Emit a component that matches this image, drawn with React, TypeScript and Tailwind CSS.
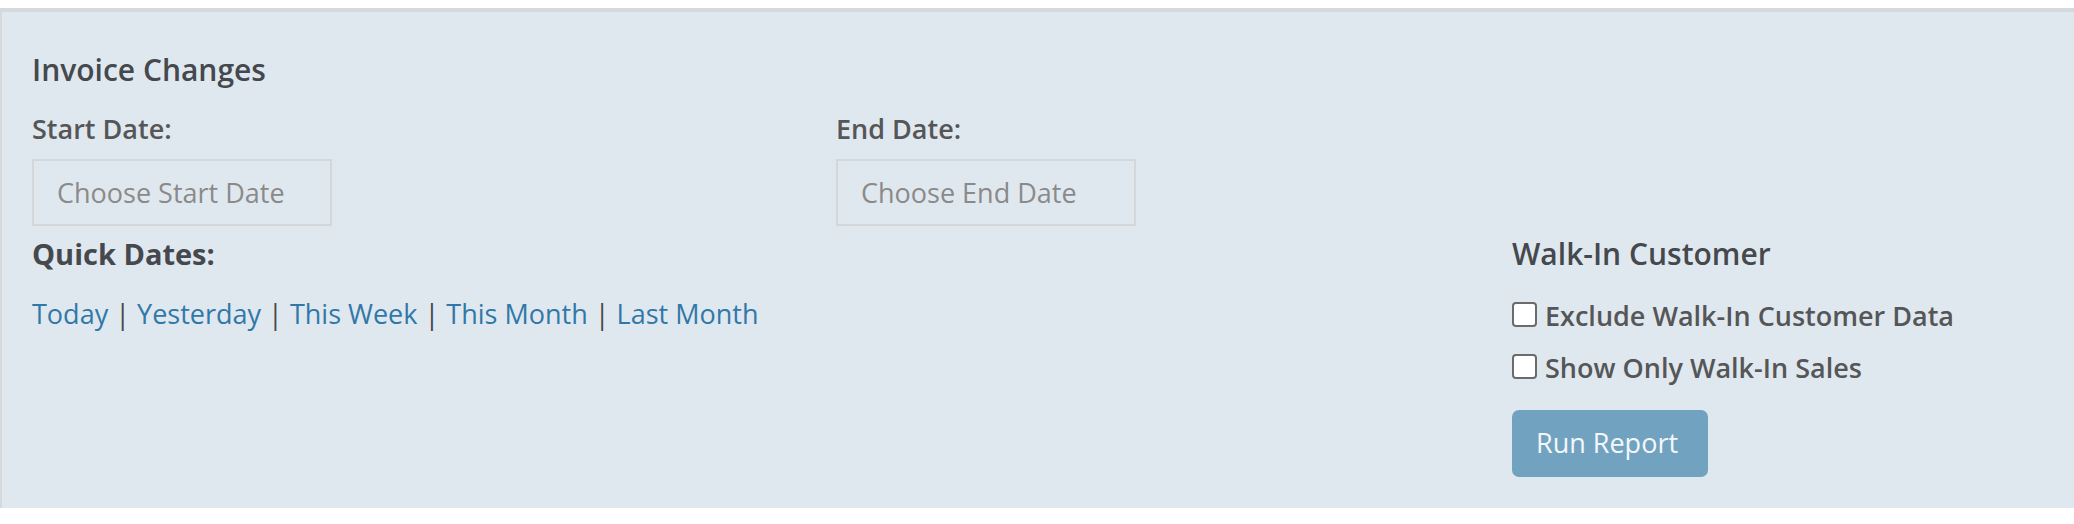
import React from "react";

const Check = ({ label }: { label: string }) => (
  <label className="flex items-start">
    <input
      type="checkbox"
      className="appearance-none mt-[3px] w-[25px] h-[25px] shrink-0 rounded-[4px] border-2 border-[#6b6b6b] bg-white"
    />
    <span className="ml-[8px] text-[27px] leading-[34px] font-semibold text-[#555658]">{label}</span>
  </label>
);

export default function App() {
  const links = ["Today", "Yesterday", "This Week", "This Month", "Last Month"];
  return (
    <div className="w-[2074px] h-[524px] bg-white pt-[8px] font-['Open_Sans','Noto_Sans',sans-serif]">
      <div className="border-t-4 border-l-2 border-[#d6d9dc] bg-[#e0e8ef] pl-[30px] pt-[40px] pb-[31px]">
        <h4 className="text-[30px] leading-[36px] font-semibold text-[#45484d]">Invoice Changes</h4>

        <div className="mt-[24px] grid grid-cols-[804px_300px]">
          <div className="flex flex-col">
            <label className="text-[27px] leading-[34px] font-semibold text-[#555658]">Start Date:</label>
            <input
              placeholder="Choose Start Date"
              className="mt-[13px] w-[300px] h-[67px] border-2 border-[#d3d7da] bg-transparent pl-[23px] text-[27px] text-[#555] placeholder:text-[#8a8a8a] outline-none"
            />
          </div>
          <div className="flex flex-col">
            <label className="text-[27px] leading-[34px] font-semibold text-[#555658]">End Date:</label>
            <input
              placeholder="Choose End Date"
              className="mt-[13px] w-[300px] h-[67px] border-2 border-[#d3d7da] bg-transparent pl-[23px] text-[27px] text-[#555] placeholder:text-[#8a8a8a] outline-none"
            />
          </div>
        </div>

        <div className="mt-[10px] grid grid-cols-[1480px_1fr]">
          <div>
            <h4 className="text-[29px] leading-[36px] font-bold text-[#45484d]">Quick Dates:</h4>
            <div className="mt-[24px] text-[27px] leading-[36px] text-[#45484d]">
              {links.map((l, i) => (
                <React.Fragment key={l}>
                  {i > 0 && " | "}
                  <a href="#" className="text-[#3178a8]">{l}</a>
                </React.Fragment>
              ))}
            </div>
          </div>
          <div>
            <h4 className="text-[30px] leading-[36px] font-semibold text-[#45484d]">Walk-In Customer</h4>
            <div className="mt-[27px]">
              <Check label="Exclude Walk-In Customer Data" />
            </div>
            <div className="mt-[18px]">
              <Check label="Show Only Walk-In Sales" />
            </div>
            <button className="mt-[25px] w-[196px] h-[67px] rounded-[7px] bg-[#71a3c1] pl-[24px] text-left text-[27px] text-[#f4f7fa]">
              Run Report
            </button>
          </div>
        </div>
      </div>
    </div>
  );
}
